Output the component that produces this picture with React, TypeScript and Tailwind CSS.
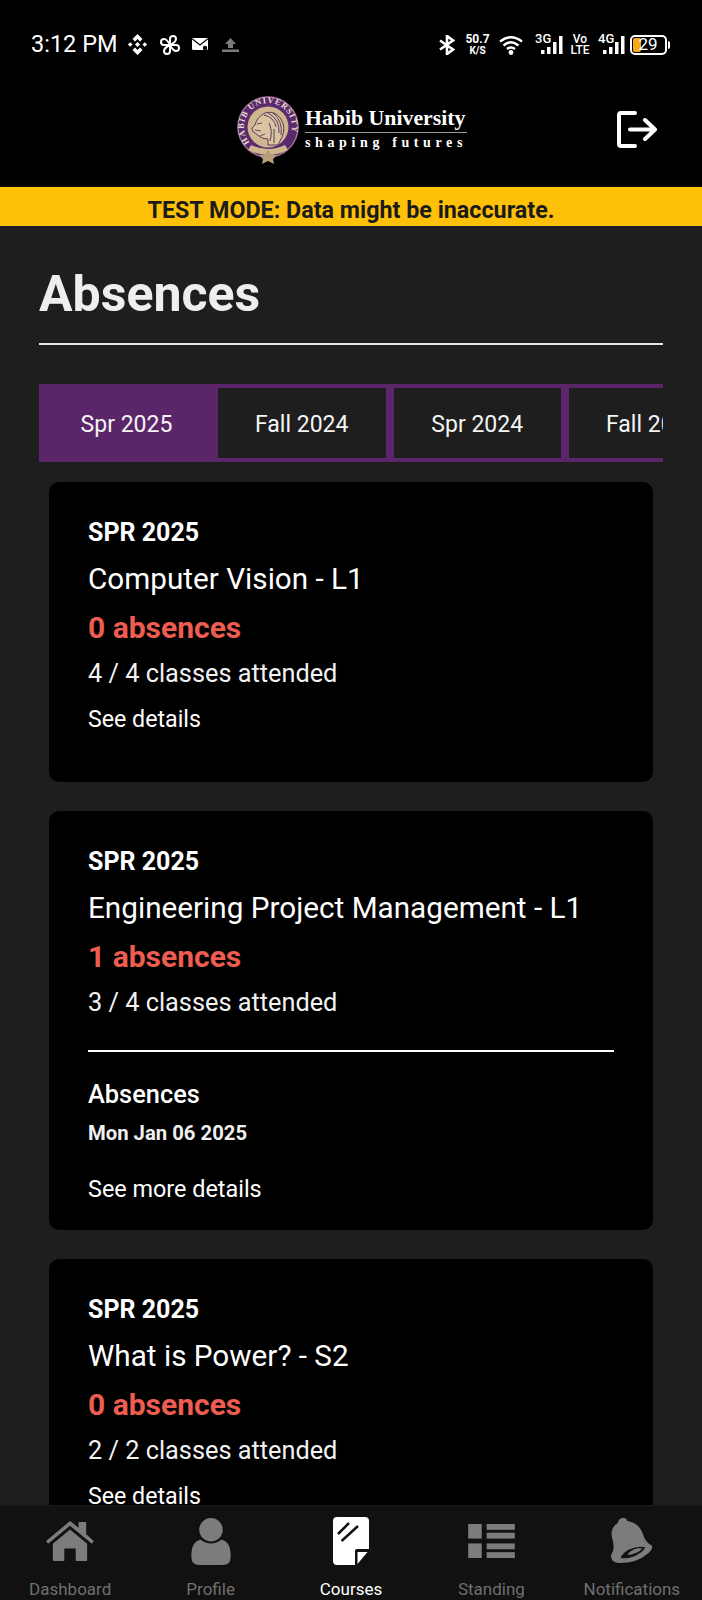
import React from "react";

const tabs = ["Spr 2025", "Fall 2024", "Spr 2024", "Fall 2023"];

const HomeIcon = () => (
  <svg width="50" height="40" viewBox="0 0 50 42" fill="#7c7c7c">
    <path d="M25 0 L34 7 L34 1 L42 1 L42 14 L50 21 L48 24 L25 5 L2 24 L0 21 Z" />
    <path d="M25 9 L43 24 L43 41 Q43 42 42 42 L31 42 L31 29 L19 29 L19 42 L8 42 Q7 42 7 41 L7 24 Z" />
  </svg>
);

const ProfileIcon = () => (
  <svg width="40" height="47" viewBox="0 0 40 48" fill="#7c7c7c">
    <circle cx="20" cy="12" r="12" />
    <path d="M9 22 Q20 30 31 22 Q40 25 40 36 L40 40 Q40 48 32 48 L8 48 Q0 48 0 40 L0 36 Q0 25 9 22 Z" />
  </svg>
);

const CoursesIcon = () => (
  <svg width="36" height="48" viewBox="0 0 36 48" fill="#fff">
    <path d="M4 0 L32 0 Q36 0 36 4 L36 32 L24 32 Q22 32 22 34 L22 48 L4 48 Q0 48 0 44 L0 4 Q0 0 4 0 Z" />
    <path d="M24.5 35 L34.5 35 L24.5 47 Z" />
    <path d="M5 17 L16 6 M8.6 24 L25 9" stroke="#111" strokeWidth="2.5" fill="none" />
  </svg>
);

const StandingIcon = () => (
  <svg width="47" height="34" viewBox="0 0 48 35" fill="#7c7c7c">
    <rect x="0" y="0" width="14" height="15" />
    <rect x="0" y="20" width="14" height="15" />
    <rect x="19" y="0" width="29" height="6" />
    <rect x="19" y="9" width="29" height="6" />
    <rect x="19" y="20" width="29" height="6" />
    <rect x="19" y="29" width="29" height="6" />
  </svg>
);

const BellIcon = () => (
  <svg width="43" height="46" viewBox="0 0 44 47" fill="#7c7c7c">
    <path d="M12 0 Q16 -1 18 3 Q30 5 34 17 Q36 25 43 28 Q44 32 39 36 Q28 46 10 46 Q1 46 1 38 Q6 32 2 20 Q0 10 8 5 Q9 1 12 0 Z" />
    <path d="M11 41 Q12 36 20 32 Q29 28 36 30 Q34 35 25 39 Q17 42 11 41 Z" fill="#111" />
    <path d="M18 38 Q20 33 28 31 Q32 31 33 31 Q30 36 18 38 Z" fill="#7c7c7c" />
  </svg>
);

const navItems = [
  { label: "Dashboard", icon: <HomeIcon />, active: false },
  { label: "Profile", icon: <ProfileIcon />, active: false },
  { label: "Courses", icon: <CoursesIcon />, active: true },
  { label: "Standing", icon: <StandingIcon />, active: false },
  { label: "Notifications", icon: <BellIcon />, active: false },
];

const Crest = () => (
  <svg width="68" height="70" viewBox="0 0 68 70" className="shrink-0">
    <circle cx="33" cy="32" r="31" fill="#5a2a6e" />
    <circle cx="33" cy="32" r="30" fill="none" stroke="#cdb58f" strokeWidth="0.8" />
    <circle cx="33" cy="32" r="20.5" fill="#cfb68f" />
    {/* lion, facing left */}
    <path d="M17 33 L20 30 Q22 22 30 18 Q40 15 46 24 Q51 33 47 42 L43 50 L33 50 L33 44 Q27 44 24 41 L20 38 Q17 37 17 33 Z" fill="#d9c4a0" stroke="#5d3a5f" strokeWidth="1" />
    <path d="M29 20 Q39 22 41 32 M33 18 Q45 24 44 38 M38 18 Q48 26 46 40 M34 28 Q38 36 35 46 M39 34 L39 48" stroke="#5d3a5f" strokeWidth="1" fill="none" />
    <path d="M22 29 L27 28 M20 35 L26 36 M25 41 L30 39" stroke="#5d3a5f" strokeWidth="0.9" fill="none" />
    {/* ribbon and star */}
    <path d="M13 55 Q33 65 53 55 L50 50 Q33 58 16 50 Z" fill="#cfb68f" />
    <path d="M33 54 L36 60 L42 60 L38 64 L39 69 L33 66 L27 69 L28 64 L24 60 L30 60 Z" fill="#b79f7c" />
    <path id="crest-arc" d="M14.6 47.4 A 24 24 0 1 1 51.4 47.4" fill="none" />
    <text fontFamily="'Liberation Serif', serif" fontSize="8.5" fontWeight="700" fill="#e9dfcf" letterSpacing="0.9">
      <textPath href="#crest-arc">HABIB UNIVERSITY</textPath>
    </text>
  </svg>
);

const LogoutIcon = () => (
  <svg width="40" height="37" viewBox="0 0 40 37" fill="none" stroke="#fff" strokeWidth="4" strokeLinejoin="round" strokeLinecap="round">
    <path d="M18 2 L4 2 Q2 2 2 4 L2 33 Q2 35 4 35 L18 35" />
    <path d="M13 18.5 L37 18.5 M28 9 L38 18.5 L28 28" />
  </svg>
);

const Bars = () => (
  <svg width="22" height="20" viewBox="0 0 22 20" fill="#fff">
    <rect x="0" y="15" width="3.5" height="4" />
    <rect x="6" y="12" width="3.5" height="7" />
    <rect x="12" y="7" width="3.5" height="12" />
    <rect x="18" y="1" width="3.5" height="18" />
  </svg>
);

const StatusBar = () => (
  <div className="flex h-[88px] items-center justify-between pl-[31px] pr-[32px] pt-[1px] text-white">
    <div className="flex items-center">
      <span className="text-[23.5px] leading-none">3:12 PM</span>
      <div className="ml-[10px] flex items-center gap-[12px]">
        <svg width="21" height="21" viewBox="0 0 21 21" fill="#fff">
          <path d="M10.5 0 L15.5 5 L13 7.5 L10.5 5 L8 7.5 L5.5 5 Z" />
          <path d="M10.5 21 L15.5 16 L13 13.5 L10.5 16 L8 13.5 L5.5 16 Z" />
          <path d="M10.5 8 L13 10.5 L10.5 13 L8 10.5 Z" />
          <path d="M3.2 8.2 L5.5 10.5 L3.2 12.8 L0.9 10.5 Z" />
          <path d="M17.8 8.2 L20.1 10.5 L17.8 12.8 L15.5 10.5 Z" />
        </svg>
        <svg width="20" height="20" viewBox="0 0 20 20" fill="none" stroke="#fff" strokeWidth="2">
          <path d="M10 10 L10 4 Q10 1 13 1 Q16 1 16 4 Q16 7 10 10 Z" />
          <path d="M10 10 L16 10 Q19 10 19 13 Q19 16 16 16 Q13 16 10 10 Z" />
          <path d="M10 10 L10 16 Q10 19 7 19 Q4 19 4 16 Q4 13 10 10 Z" />
          <path d="M10 10 L4 10 Q1 10 1 7 Q1 4 4 4 Q7 4 10 10 Z" />
        </svg>
        <svg width="16" height="13" viewBox="0 0 16 13">
          <rect x="0" y="0" width="16" height="12" rx="1.5" fill="#fff" />
          <path d="M0.5 1 L8 7 L15.5 1" stroke="#000" strokeWidth="1.2" fill="none" />
          <circle cx="13" cy="10" r="2.2" fill="#000" />
        </svg>
        <svg className="ml-[2px]" width="17" height="14" viewBox="0 0 17 14" fill="#7c7c7c">
          <path d="M8.5 0 L14 6 L11 6 L11 10 L6 10 L6 6 L3 6 Z" />
          <rect x="0" y="11.5" width="17" height="2.5" />
        </svg>
      </div>
    </div>
    <div className="flex items-center">
      <svg width="16" height="20" viewBox="0 0 16 20" fill="none" stroke="#fff" strokeWidth="2.6">
        <path d="M1 5.5 L14 14.5 L8 19 L8 1 L14 5.5 L1 14.5" />
      </svg>
      <div className="ml-[10px] flex w-[25px] flex-col items-center text-[12px] font-bold leading-[11px]">
        <span>50.7</span>
        <span className="text-[10px] leading-[11px]">K/S</span>
      </div>
      <svg className="ml-[9px]" width="24" height="20" viewBox="0 0 24 20" fill="none" stroke="#fff" strokeWidth="2.4">
        <path d="M1 6.5 Q12 -2 23 6.5" />
        <path d="M4.5 10.5 Q12 4 19.5 10.5" />
        <path d="M8 14 Q12 11 16 14" />
        <circle cx="12" cy="17.5" r="1.2" fill="#fff" />
      </svg>
      <div className="relative ml-[12px] h-[20px] w-[28px]">
        <span className="absolute left-0 top-[-3px] text-[13px] font-medium leading-none">3G</span>
        <div className="absolute bottom-0 right-0"><Bars /></div>
      </div>
      <div className="ml-[7px] flex w-[20px] flex-col items-center text-[12px] font-medium leading-[11px]">
        <span>Vo</span>
        <span>LTE</span>
      </div>
      <div className="relative ml-[8px] h-[20px] w-[27px]">
        <span className="absolute left-0 top-[-3px] text-[13px] font-medium leading-none">4G</span>
        <div className="absolute bottom-0 right-0"><Bars /></div>
      </div>
      <div className="ml-[5px] flex items-center">
        <div className="relative h-[20px] w-[37px] overflow-hidden rounded-[5px] border-2 border-white">
          <div className="absolute bottom-[1px] left-[1px] top-[1px] w-[8px] rounded-[2px] bg-[#f9a91a]" />
          <span className="absolute inset-0 flex items-center justify-center pr-[1px] text-[17px] leading-none">29</span>
        </div>
        <div className="ml-[1px] h-[8px] w-[2px] rounded-r bg-white" />
      </div>
    </div>
  </div>
);

const Card = ({ name, absences, attended, children }: { name: string; absences: number; attended: string; children: React.ReactNode }) => (
  <div className="rounded-[10px] bg-black px-[39px] pt-[37px] text-white">
    <p className="text-[25px] font-bold leading-[28px]">SPR 2025</p>
    <p className="mt-[14px] text-[29.7px] leading-[36px]">{name}</p>
    <p className="mt-[13px] text-[30px] font-bold leading-[36px] text-[#ee5d50]">{absences} absences</p>
    <p className="mt-[11px] text-[25.3px] leading-[34px] text-[#f2f2f2]">{attended}</p>
    {children}
  </div>
);

export default function App() {
  return (
    <div className="relative flex h-[1600px] w-[702px] flex-col overflow-hidden bg-[#1e1e1e] font-['Roboto',sans-serif]">
      <div className="bg-black">
        <StatusBar />
        <div className="relative flex h-[99px] items-start justify-center">
          <div className="mt-[7px] flex items-start">
            <Crest />
            <div className="ml-[2px] mt-[9px] flex flex-col font-['Liberation_Serif',serif] text-white">
              <span className="text-[21.8px] font-bold leading-[28px]">Habib University</span>
              <div className="h-[1px] bg-[#9a9a9a]" />
              <span className="mt-[1px] whitespace-nowrap text-[14px] font-bold leading-[18px] tracking-[0.33em]">shaping futures</span>
            </div>
          </div>
          <div className="absolute right-[45px] top-[23px]"><LogoutIcon /></div>
        </div>
      </div>
      <div className="flex h-[39px] items-center justify-center bg-[#ffc107] pt-[7px] text-[23.3px] font-bold text-[#1b1b1b]">
        TEST MODE: Data might be inaccurate.
      </div>

      <main className="flex-1 overflow-hidden px-[39px] pt-[39px]">
        <h1 className="border-b-2 border-[#e6e6e6] pb-[20px] text-[50px] font-bold leading-[58px] text-[#eeeeee]">Absences</h1>
        <div className="mt-[39px] flex h-[78px] overflow-hidden">
          {tabs.map((tab, i) => (
            <div
              key={tab}
              className={
                i === 0
                  ? "flex h-full w-[175px] shrink-0 items-center justify-center border-[4px] border-[#5b2669] bg-[#5b2669] pt-[4px] text-[23px] text-[#f4f4f4]"
                  : "flex h-full w-[175.5px] shrink-0 items-center justify-center border-[4px] border-[#5b2669] pt-[4px] text-[23px] text-[#f4f4f4]"
              }
            >
              {tab}
            </div>
          ))}
        </div>
        <div className="mt-[20px] flex flex-col gap-[29px] px-[10px]">
          <Card name="Computer Vision - L1" absences={0} attended="4 / 4 classes attended">
            <p className="mt-[11px] pb-[46px] text-[23.2px] leading-[34px]">See details</p>
          </Card>
          <Card name="Engineering Project Management - L1" absences={1} attended="3 / 4 classes attended">
            <div className="mt-[30px] border-t-2 border-white pt-[25px]">
              <p className="text-[25.4px] font-medium leading-[34px]">Absences</p>
              <p className="mt-[9px] text-[20.3px] font-bold leading-[26px] text-[#f0f0f0]">Mon Jan 06 2025</p>
              <p className="mt-[26px] pb-[24px] text-[23.4px] leading-[34px]">See more details</p>
            </div>
          </Card>
          <Card name="What is Power? - S2" absences={0} attended="2 / 2 classes attended">
            <p className="mt-[11px] pb-[46px] text-[23.2px] leading-[34px]">See details</p>
          </Card>
        </div>
      </main>

      <nav className="absolute bottom-0 left-0 right-0 flex h-[95px] border-t border-[#1a1a1a] bg-[#111111]">
        {navItems.map((item) => (
          <div key={item.label} className="flex flex-1 flex-col items-center">
            <div className="flex h-[62px] items-center pt-[8px]">{item.icon}</div>
            <span className={item.active ? "mt-[10px] text-[17px] leading-[22px] text-white" : "mt-[10px] text-[17px] leading-[22px] text-[#6f6f6f]"}>
              {item.label}
            </span>
          </div>
        ))}
      </nav>
    </div>
  );
}
